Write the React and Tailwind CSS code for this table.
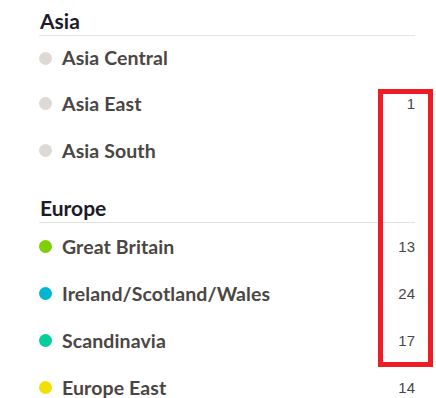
import React from 'react';

const SECTIONS = [
  {
    title: 'Asia',
    items: [
      { name: 'Asia Central', dot: 'bg-[#dddad5]', h: 'h-[44px]' },
      { name: 'Asia East', dot: 'bg-[#dddad5]', count: 1, h: 'h-[47px]' },
      { name: 'Asia South', dot: 'bg-[#dddad5]', h: 'h-[47px]' },
    ],
  },
  {
    title: 'Europe',
    items: [
      { name: 'Great Britain', dot: 'bg-[#7ed000]', count: 13, h: 'h-[47px]' },
      { name: 'Ireland/Scotland/Wales', dot: 'bg-[#00b7d3]', count: 24, h: 'h-[47px]' },
      { name: 'Scandinavia', dot: 'bg-[#00cf9b]', count: 17, h: 'h-[47px]' },
      { name: 'Europe East', dot: 'bg-[#f2e000]', count: 14, h: 'h-[47px]' },
    ],
  },
];

export default function App() {
  return (
    <div className="relative w-[436px] h-[398px] overflow-hidden bg-white pl-[39px] pr-[21px] pt-[8px] font-['Lato',sans-serif]">
      {SECTIONS.map((section, i) => (
        <div key={section.title} className={i > 0 ? 'mt-[21px]' : ''}>
          <h2 className="border-b border-[#e3e3e3] pb-[2px] pl-[1px] text-[21px] font-bold leading-[25px] text-[#1c1b29]">
            {section.title}
          </h2>
          {section.items.map(item => (
            <div key={item.name} className={`flex items-center ${item.h}`}>
              <span className={`w-[13px] h-[13px] rounded-full shrink-0 ${item.dot}`} />
              <span className="ml-[10px] flex-1 text-[19.5px] font-bold tracking-[0.1px] text-[#4b4643]">{item.name}</span>
              {item.count != null && (
                <span className="pt-[2px] font-['Liberation_Sans',sans-serif] text-[15px] text-[#45474f]">{item.count}</span>
              )}
            </div>
          ))}
        </div>
      ))}

      {/* highlight box */}
      <div className="absolute left-[378px] top-[89px] w-[55px] h-[278px] border-[5px] border-[#ee1c25]" />
    </div>
  );
}
